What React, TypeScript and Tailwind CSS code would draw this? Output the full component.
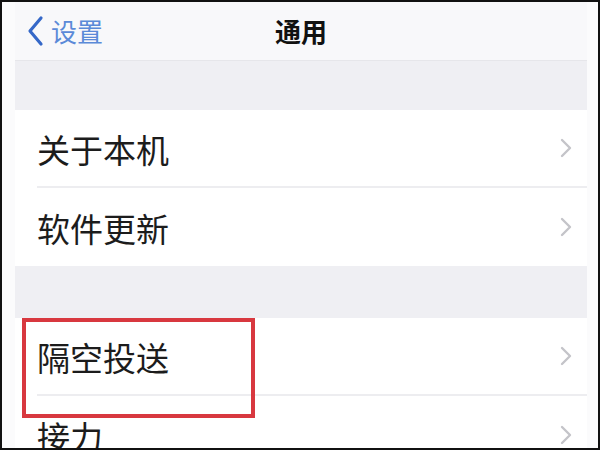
const font = { fontFamily: '"Noto Sans CJK SC", "Noto Sans", sans-serif' };

function Chevron() {
  return (
    <svg width="16" height="22" viewBox="0 0 16 22" className="shrink-0">
      <path d="M4 3 L12 11 L4 19" fill="none" stroke="#c4c4c9" strokeWidth="2.4" strokeLinecap="round" strokeLinejoin="round" />
    </svg>
  );
}

function Row({ label, last }: { label: string; last?: boolean }) {
  return (
    <div className="flex h-[78px] shrink-0 items-center bg-white pl-[22px]">
      <div className={`flex h-full flex-1 items-center pr-[13px] ${last ? "" : "border-b-2 border-[#ededf0]"}`}>
        <span className="flex-1 pt-[3px] text-[33px] leading-none text-[#1c1c1c]">{label}</span>
        <Chevron />
      </div>
    </div>
  );
}

export default function App() {
  return (
    <div style={font} className="h-[450px] w-[600px] overflow-hidden border-2 border-[#111] bg-[#fbfbfc]">
      <div className="flex h-full flex-col pl-[13px] pr-[11px]">
        {/* nav bar */}
        <div className="relative flex h-[58px] shrink-0 items-center bg-[#f8f8fa]">
          <div className="relative z-10 flex items-center gap-[6px] pl-[12px]">
            <svg width="18" height="32" viewBox="0 0 18 32">
              <path d="M14 3 L3 16 L14 29" fill="none" stroke="#3568c8" strokeWidth="3.2" strokeLinecap="round" strokeLinejoin="round" />
            </svg>
            <span className="text-[26px] leading-none text-[#5b8ad8]">设置</span>
          </div>
          <span className="absolute left-0 right-0 text-center text-[26px] font-bold leading-none text-[#111]">通用</span>
        </div>
        <div className="h-[50px] shrink-0 border-t border-[#e6e6ea] bg-[#efeff3]" />
        <Row label="关于本机" />
        <Row label="软件更新" last />
        <div className="h-[52px] shrink-0 bg-[#efeff3]" />
        <div className="relative">
          <Row label="隔空投送" />
          <Row label="接力" last />
          <div className="absolute left-[7px] top-0 h-[100px] w-[233px] border-[4px] border-[#d8383f]" />
        </div>
      </div>
    </div>
  );
}
